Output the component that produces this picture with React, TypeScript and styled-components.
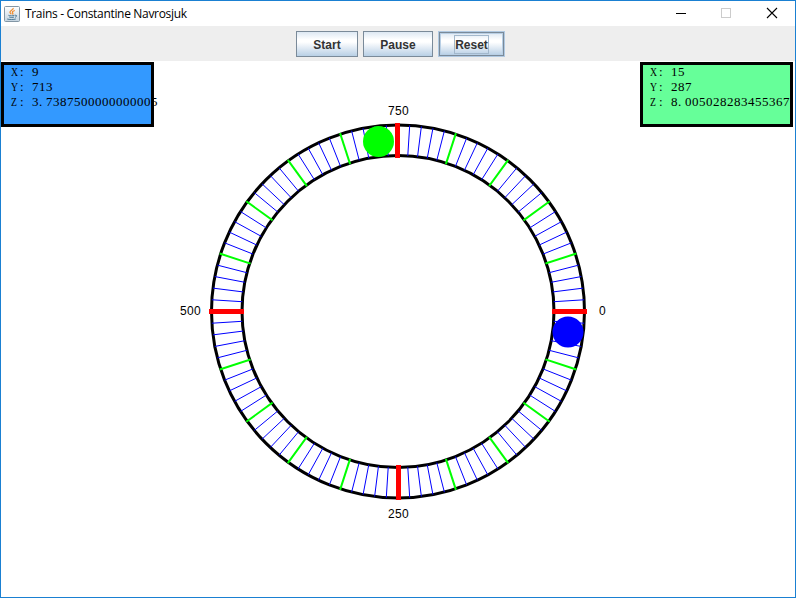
import React from 'react';
import styled, { createGlobalStyle, css } from 'styled-components';

const GlobalStyle = createGlobalStyle`
  * { box-sizing: border-box; }
  html, body { margin: 0; padding: 0; overflow: hidden; background: #fff; }
`;

const Window = styled.div`
  display: flex;
  flex-direction: column;
  width: 796px;
  height: 598px;
  border: 1px solid #1a80d2;
  background: #fff;
  overflow: hidden;
`;

const TitleBar = styled.header`
  display: flex;
  align-items: center;
  flex: none;
  height: 25px;
  padding-left: 3px;
  background: #fff;
`;

const Title = styled.h1`
  flex: 1;
  margin: 0 0 0 5px;
  font: 400 12px/24px 'Open Sans', 'Noto Sans', sans-serif;
  letter-spacing: -0.32px;
  color: #000;
  white-space: nowrap;
`;

const WindowControls = styled.div`
  display: flex;
  gap: 34px;
  padding-right: 17px;

  svg { display: block; margin-top: -1px; }
`;

const Toolbar = styled.div`
  display: flex;
  flex: none;
  align-items: flex-start;
  justify-content: flex-start;
  gap: 5px;
  height: 35px;
  padding: 5px 0 0 295px;
  background: #eee;
`;

const SwingButton = styled.button<{ $width: number; $focused?: boolean }>`
  display: flex;
  align-items: center;
  justify-content: center;
  width: ${p => p.$width}px;
  height: 26px;
  margin: 0;
  padding: 0;
  border: 1px solid #7a8a99;
  border-radius: 0;
  background: linear-gradient(#dde8f3 0%, #ffffff 32%, #ffffff 42%, #b8cfe5 100%);
  font: 700 12px/14px 'Liberation Sans', Arial, sans-serif;
  color: #333;
  ${p =>
    p.$focused &&
    css`
      outline: 1px solid #b0c9e2;
      height: 24px;
      margin: 1px 0 0 1px;
      box-shadow: inset 0 0 0 1px #b8cfe5;
    `}
`;

const ButtonLabel = styled.span<{ $focused?: boolean }>`
  padding: 2px 0 1px;
  border: 1px solid ${p => (p.$focused ? '#a3b8cc' : 'transparent')};
`;

const Track = styled.main`
  position: relative;
  flex: 1;
  min-height: 0;
  background: #fff;
`;

const Dial = styled.svg`
  position: absolute;
  inset: 0;
  width: 794px;
  height: 536px;
  font: 12px 'Liberation Sans', Arial, sans-serif;
  letter-spacing: 0.35px;
`;

const Readouts = styled.div`
  position: relative;
  display: flex;
  justify-content: space-between;
  padding: 1px 2px 0 0;
`;

const Panel = styled.section<{ $color: string }>`
  width: 153px;
  height: 65px;
  padding: 0 0 0 7px;
  border: 3px solid #000;
  background: ${p => p.$color};
  color: #000;
  font: 13px/13px 'Liberation Serif', 'Times New Roman', serif;
  white-space: nowrap;
`;

const Reading = styled.div`
  display: flex;
  height: 15px;
`;

const Axis = styled.span`
  flex: none;
  width: 7px;
  transform: scaleX(0.75);
  transform-origin: 0 50%;
`;

const Colon = styled.span`
  flex: none;
  width: 14px;
  padding-left: 2px;
`;

const Value = styled.span`
  flex: none;
  letter-spacing: 0.5px;
`;

const Point = styled.span`
  padding-right: 3.25px;
`;

const CX = 397;
const CY = 250.5;
const INNER = 156;
const OUTER = 186.5;

const ticks = Array.from({ length: 100 }, (_, i) => i).filter(i => i % 25 !== 0);

function Tick({ index }: { index: number }) {
  const a = (index * 3.6 * Math.PI) / 180;
  const major = index % 5 === 0;
  const c = Math.cos(a);
  const s = Math.sin(a);
  return (
    <line
      x1={CX + INNER * c}
      y1={CY + INNER * s}
      x2={CX + OUTER * c}
      y2={CY + OUTER * s}
      stroke={major ? '#00ff00' : '#0000ff'}
      strokeWidth={major ? 2 : 1}
      strokeLinecap={major ? 'square' : 'butt'}
    />
  );
}

function TrainDial() {
  return (
    <Dial viewBox="0 0 794 536">
      <circle cx={CX} cy={CY} r={OUTER} fill="none" stroke="#000" strokeWidth="3" />
      <circle cx={CX} cy={CY} r={INNER} fill="none" stroke="#000" strokeWidth="3" />
      {ticks.map(i => (
        <Tick key={i} index={i} />
      ))}
      <g fill="#f00" shapeRendering="crispEdges">
        <rect x="551" y="248" width="35" height="5" />
        <rect x="208" y="248" width="35" height="5" />
        <rect x="394" y="62" width="5" height="35" />
        <rect x="395" y="404" width="5" height="35" />
      </g>
      <circle cx="377.5" cy="80.5" r="15.5" fill="#0f0" />
      <circle cx="567" cy="271" r="15.5" fill="#00f" />
      <text x="387" y="54">750</text>
      <text x="598" y="254">0</text>
      <text x="387" y="457">250</text>
      <text x="179" y="254">500</text>
    </Dial>
  );
}

function Measure({ axis, value }: { axis: string; value: string }) {
  const [whole, fraction] = value.split('.');
  return (
    <Reading>
      <Axis>{axis}</Axis>
      <Colon>:</Colon>
      <Value>
        {whole}
        {fraction && <Point>.</Point>}
        {fraction}
      </Value>
    </Reading>
  );
}

function JavaIcon() {
  return (
    <svg width="16" height="16" viewBox="0 0 16 16">
      <defs>
        <linearGradient id="tile" x1="0" y1="0" x2="0" y2="1">
          <stop offset="0" stopColor="#fff" />
          <stop offset="1" stopColor="#c3d3df" />
        </linearGradient>
      </defs>
      <rect x=".5" y=".5" width="15" height="15" rx="1" fill="url(#tile)" stroke="#8396a5" />
      <path d="M9.2 2C9.6 4 5.6 4.6 6 6.4c.2.8 1 1.1 1 1.9M10.8 4.5C8.4 5.3 8 6 8.7 7c.4.6.2 1-.2 1.5" fill="none" stroke="#f08a2c" strokeWidth="1.3" />
      <path d="M4.4 9.3c1.5.7 4.5.7 6 0M5.2 11c1.2.7 3.6.7 4.8 0M3.2 13c2 .7 6.6.7 8.6 0M10.8 9.3c2.3-.7 2.5 1.3.2 2" fill="none" stroke="#41718f" strokeWidth=".9" />
    </svg>
  );
}

export default function App() {
  return (
    <>
      <GlobalStyle />
      <Window>
        <TitleBar>
          <JavaIcon />
          <Title>Trains - Constantine Navrosjuk</Title>
          <WindowControls>
            <svg width="12" height="12" viewBox="0 0 12 12">
              <path d="M2 6.5h10" stroke="#000" shapeRendering="crispEdges" />
            </svg>
            <svg width="12" height="12" viewBox="0 0 12 12">
              <rect x="1.5" y="1.5" width="9" height="9" fill="none" stroke="#ccc" shapeRendering="crispEdges" />
            </svg>
            <svg width="12" height="12" viewBox="0 0 12 12">
              <path d="M1 1l10 10M11 1L1 11" stroke="#000" strokeWidth="1.1" />
            </svg>
          </WindowControls>
        </TitleBar>
        <Toolbar>
          <SwingButton $width={62}>
            <ButtonLabel>Start</ButtonLabel>
          </SwingButton>
          <SwingButton $width={70}>
            <ButtonLabel>Pause</ButtonLabel>
          </SwingButton>
          <SwingButton $width={65} $focused>
            <ButtonLabel $focused>Reset</ButtonLabel>
          </SwingButton>
        </Toolbar>
        <Track>
          <TrainDial />
          <Readouts>
            <Panel $color="#3399ff">
              <Measure axis="X" value="9" />
              <Measure axis="Y" value="713" />
              <Measure axis="Z" value="3.7387500000000005" />
            </Panel>
            <Panel $color="#66ff99">
              <Measure axis="X" value="15" />
              <Measure axis="Y" value="287" />
              <Measure axis="Z" value="8.005028283455367" />
            </Panel>
          </Readouts>
        </Track>
      </Window>
    </>
  );
}
